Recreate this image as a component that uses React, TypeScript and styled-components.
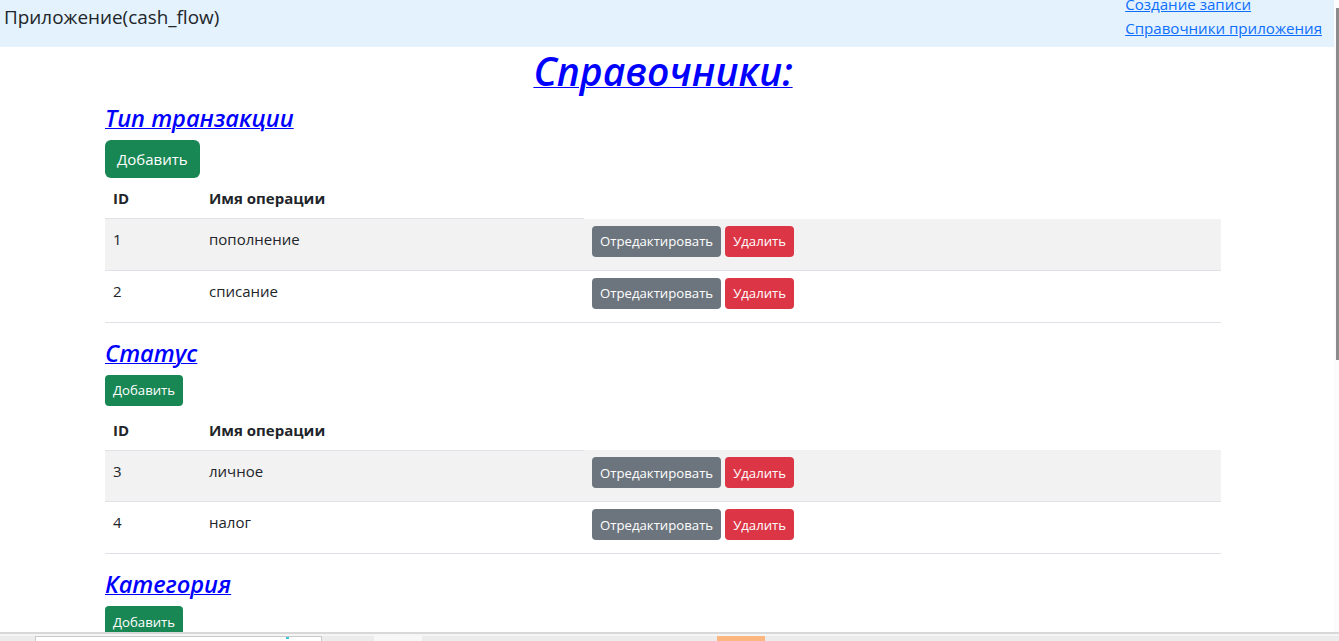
import React from "react";
import styled, { createGlobalStyle, css } from "styled-components";

const Global = createGlobalStyle`
  html, body {
    margin: 0;
    padding: 0;
    background: #ffffff;
    overflow: hidden;
  }
  body {
    font-family: "Open Sans", "Noto Sans", sans-serif;
    font-size: 15px;
    line-height: 24px;
    color: #212529;
  }
  * { box-sizing: border-box; }
`;

const Shell = styled.div`
  display: flex;
  height: 100vh;
  width: 100vw;
`;

const Main = styled.div`
  flex: 1;
  min-width: 0;
  overflow: hidden;
`;

const Header = styled.header`
  height: 47px;
  background: #e3f2fd;
  display: flex;
  justify-content: space-between;
  align-items: flex-start;
  padding: 0 12px 0 4px;
  overflow: hidden;
`;

const Brand = styled.div`
  font-size: 18.9px;
  line-height: 34px;
  color: #212529;
`;

const NavLinks = styled.nav`
  display: flex;
  flex-direction: column;
  margin-top: -8px;
`;

const NavLink = styled.a`
  font-size: 15.1px;
  line-height: 24px;
  color: #0d6efd;
  text-decoration: underline;
`;

const Container = styled.main`
  width: 1116px;
  margin-left: 105px;
`;

const PageTitle = styled.h1`
  margin: 1px 0 9px;
  text-align: center;
  font-size: 39px;
  line-height: 46px;
  font-style: italic;
  font-weight: 600;
`;

const BlueLink = styled.a`
  color: #0000ff;
  text-decoration: underline;
  text-decoration-thickness: from-font;
`;

const SectionTitle = styled.h3`
  margin: 0 0 7px;
  padding-top: 1px;
  font-size: 23.6px;
  line-height: 29px;
  font-style: italic;
  font-weight: 600;
`;

const Section = styled.section<{ $small?: boolean }>`
  margin-bottom: 15px;
  & > button {
    margin-bottom: ${(p) => (p.$small ? "4px" : "0")};
  }
`;

type Variant = "success" | "secondary" | "danger";
const colors: Record<Variant, string> = {
  success: "#198754",
  secondary: "#6c757d",
  danger: "#dc3545",
};

const Button = styled.button<{ $variant: Variant; $small?: boolean }>`
  display: inline-flex;
  align-items: center;
  justify-content: center;
  border: none;
  color: #ffffff;
  background: ${(p) => colors[p.$variant]};
  font-family: "Open Sans", "Noto Sans", sans-serif;
  cursor: pointer;
  ${(p) =>
    p.$small
      ? css`
          height: 31px;
          padding: 0 8px;
          font-size: 13.2px;
          border-radius: 4px;
        `
      : css`
          height: 38px;
          padding: 0 12px;
          font-size: 15px;
          border-radius: 6px;
        `}
`;

const Table = styled.table`
  width: 100%;
  border-collapse: collapse;
  margin-top: 0;
`;

const Th = styled.th<{ $noBorder?: boolean }>`
  text-align: left;
  font-weight: 700;
  padding: 8px;
  line-height: 24px;
  font-size: 15px;
  border-bottom: ${(p) => (p.$noBorder ? "none" : "1px solid #dee2e6")};
`;

const Row = styled.tr<{ $striped: boolean }>`
  background: ${(p) => (p.$striped ? "#f2f2f2" : "#ffffff")};
  border-bottom: 1px solid #dee2e6;
`;

const Td = styled.td`
  padding: 8px;
  line-height: 24px;
  vertical-align: top;
  font-size: 15px;
`;

const ActionCell = styled.td`
  padding: 7px 8px 10px;
  vertical-align: top;
`;

const ActionGroup = styled.div`
  display: flex;
  gap: 4px;
  height: 34px;
  align-items: flex-start;
`;

const ScrollTrack = styled.div`
  width: 5px;
  flex: none;
  background: #fbfbfb;
  position: relative;
`;

const ScrollThumb = styled.div`
  position: absolute;
  right: 0;
  top: 8px;
  width: 3px;
  height: 352px;
  background: #8b8b8b;
`;

const BottomBar = styled.div`
  position: fixed;
  left: 0;
  right: 0;
  bottom: 0;
  height: 9px;
  border-top: 2px solid #d8d8d8;
  background: linear-gradient(#f5f5f5 0 2px, #ececec 2px);
  display: flex;
  align-items: flex-end;
`;

const TaskInput = styled.div`
  margin-left: 35px;
  width: 287px;
  height: 5px;
  background: #ffffff;
  border: 1px solid #c9c9c9;
  border-bottom: none;
  position: relative;
  &::after {
    content: "";
    position: absolute;
    left: 250px;
    top: 0;
    width: 3px;
    height: 2px;
    background: #3cc4d8;
  }
`;

const TaskSlot = styled.div<{ $color: string; $gap: number }>`
  margin-left: ${(p) => p.$gap}px;
  width: 48px;
  height: 5px;
  background: ${(p) => p.$color};
`;

type Item = { id: number; name: string };

const sections: { title: string; small: boolean; rows: Item[] }[] = [
  {
    title: "Тип транзакции",
    small: false,
    rows: [
      { id: 1, name: "пополнение" },
      { id: 2, name: "списание" },
    ],
  },
  {
    title: "Статус",
    small: true,
    rows: [
      { id: 3, name: "личное" },
      { id: 4, name: "налог" },
    ],
  },
  {
    title: "Категория",
    small: true,
    rows: [],
  },
];

export default function App() {
  return (
    <>
      <Global />
      <Shell>
        <Main>
          <Header>
            <Brand>Приложение(cash_flow)</Brand>
            <NavLinks>
              <NavLink href="#">Создание записи</NavLink>
              <NavLink href="#">Справочники приложения</NavLink>
            </NavLinks>
          </Header>
          <Container>
            <PageTitle>
              <BlueLink href="#">Справочники:</BlueLink>
            </PageTitle>
            {sections.map((s) => (
              <Section key={s.title} $small={s.small}>
                <SectionTitle>
                  <BlueLink href="#">{s.title}</BlueLink>
                </SectionTitle>
                <Button $variant="success" $small={s.small}>
                  Добавить
                </Button>
                <Table>
                  <colgroup>
                    <col style={{ width: 96 }} />
                    <col style={{ width: 383 }} />
                    <col />
                  </colgroup>
                  <thead>
                    <tr>
                      <Th>ID</Th>
                      <Th>Имя операции</Th>
                      <Th $noBorder />
                    </tr>
                  </thead>
                  <tbody>
                    {s.rows.map((r, i) => (
                      <Row key={r.id} $striped={i % 2 === 0}>
                        <Td>{r.id}</Td>
                        <Td>{r.name}</Td>
                        <ActionCell>
                          <ActionGroup>
                            <Button $variant="secondary" $small>
                              Отредактировать
                            </Button>
                            <Button $variant="danger" $small>
                              Удалить
                            </Button>
                          </ActionGroup>
                        </ActionCell>
                      </Row>
                    ))}
                  </tbody>
                </Table>
              </Section>
            ))}
          </Container>
        </Main>
        <ScrollTrack>
          <ScrollThumb />
        </ScrollTrack>
      </Shell>
      <BottomBar>
        <TaskInput />
        <TaskSlot $gap={52} $color="#f7f7f7" />
        <TaskSlot $gap={295} $color="#fbb77f" />
      </BottomBar>
    </>
  );
}
